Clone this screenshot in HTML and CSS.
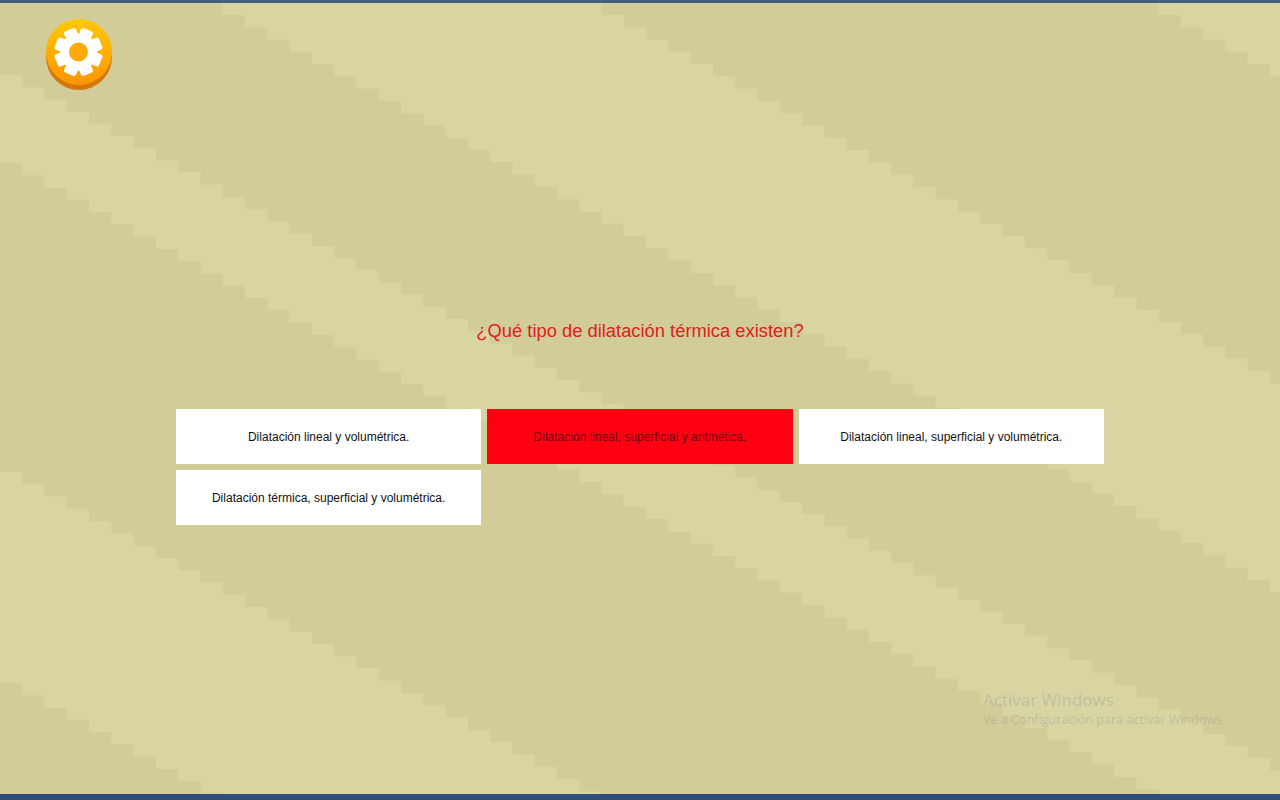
FILE: index.html
```html
<!DOCTYPE html>
<html lang="es">
<head>
    <meta charset="UTF-8">
    <meta name="viewport" content="width=device-width, initial-scale=1.0">
    <title>Dilatación térmica</title>
    <link rel="stylesheet" href="styles.css">
</head>
<body>
    <div class="pantalla">

        <!-- Fondo de franjas escalonadas: cada capa tapa lo que queda abajo a la izquierda -->
        <svg class="fondo" width="1280" height="800" viewBox="0 0 1280 800" aria-hidden="true">
            <path class="oscuro" d="M1158.6,0V15h22.28v12.28h22.28v12.28h22.28v12.28h22.28v12.28h22.28v12.28h22.28v12.28V900H0V0Z"/>
            <path class="claro" d="M601.6,0V15
                h22.28v12.28h22.28v12.28h22.28v12.28h22.28v12.28h22.28v12.28h22.28v12.28h22.28v12.28h22.28v12.28h22.28v12.28h22.28v12.28
                h22.28v12.28h22.28v12.28h22.28v12.28h22.28v12.28h22.28v12.28h22.28v12.28h22.28v12.28h22.28v12.28h22.28v12.28h22.28v12.28
                h22.28v12.28h22.28v12.28h22.28v12.28h22.28v12.28h22.28v12.28h22.28v12.28h22.28v12.28h22.28v12.28h22.28v12.28h22.28v12.28
                h22.28v12.28V900H0V0Z"/>
            <path class="oscuro" d="M222.8,0V15
                h22.28v12.28h22.28v12.28h22.28v12.28h22.28v12.28h22.28v12.28h22.28v12.28h22.28v12.28h22.28v12.28h22.28v12.28h22.28v12.28
                h22.28v12.28h22.28v12.28h22.28v12.28h22.28v12.28h22.28v12.28h22.28v12.28h22.28v12.28h22.28v12.28h22.28v12.28h22.28v12.28
                h22.28v12.28h22.28v12.28h22.28v12.28h22.28v12.28h22.28v12.28h22.28v12.28h22.28v12.28h22.28v12.28h22.28v12.28h22.28v12.28
                h22.28v12.28h22.28v12.28h22.28v12.28h22.28v12.28h22.28v12.28h22.28v12.28h22.28v12.28h22.28v12.28h22.28v12.28h22.28v12.28
                h22.28v12.28h22.28v12.28h22.28v12.28h22.28v12.28h22.28v12.28h22.28v12.28h22.28v12.28h22.28v12.28
                V900H0V0Z"/>
            <path class="claro" d="M0,75
                h22.28v12.2h22.28v12.2h22.28v12.2h22.28v12.2h22.28v12.2h22.28v12.2h22.28v12.2h22.28v12.2h22.28v12.2h22.28v12.2
                h22.28v12.2h22.28v12.2h22.28v12.2h22.28v12.2h22.28v12.2h22.28v12.2h22.28v12.2h22.28v12.2h22.28v12.2h22.28v12.2
                h22.28v12.2h22.28v12.2h22.28v12.2h22.28v12.2h22.28v12.2h22.28v12.2h22.28v12.2h22.28v12.2h22.28v12.2h22.28v12.2
                h22.28v12.2h22.28v12.2h22.28v12.2h22.28v12.2h22.28v12.2h22.28v12.2h22.28v12.2h22.28v12.2h22.28v12.2h22.28v12.2
                h22.28v12.2h22.28v12.2h22.28v12.2h22.28v12.2h22.28v12.2h22.28v12.2h22.28v12.2h22.28v12.2h22.28v12.2h22.28v12.2
                h22.28v12.2h22.28v12.2h22.28v12.2h22.28v12.2h22.28v12.2h22.28v12.2h22.28v12.2h22.28v12.2
                V900H0Z"/>
            <path class="oscuro" d="M0,163
                h22.28v12.28h22.28v12.28h22.28v12.28h22.28v12.28h22.28v12.28h22.28v12.28h22.28v12.28h22.28v12.28h22.28v12.28h22.28v12.28
                h22.28v12.28h22.28v12.28h22.28v12.28h22.28v12.28h22.28v12.28h22.28v12.28h22.28v12.28h22.28v12.28h22.28v12.28h22.28v12.28
                h22.28v12.28h22.28v12.28h22.28v12.28h22.28v12.28h22.28v12.28h22.28v12.28h22.28v12.28h22.28v12.28h22.28v12.28h22.28v12.28
                h22.28v12.28h22.28v12.28h22.28v12.28h22.28v12.28h22.28v12.28h22.28v12.28h22.28v12.28h22.28v12.28h22.28v12.28h22.28v12.28
                h22.28v12.28h22.28v12.28h22.28v12.28h22.28v12.28h22.28v12.28h22.28v12.28h22.28v12.28h22.28v12.28h22.28v12.28h22.28v12.28
                h22.28v12.28h22.28v12.28
                V900H0Z"/>
            <path class="claro" d="M0,472
                h22.28v12.28h22.28v12.28h22.28v12.28h22.28v12.28h22.28v12.28h22.28v12.28h22.28v12.28h22.28v12.28h22.28v12.28h22.28v12.28
                h22.28v12.28h22.28v12.28h22.28v12.28h22.28v12.28h22.28v12.28h22.28v12.28h22.28v12.28h22.28v12.28h22.28v12.28h22.28v12.28
                h22.28v12.28h22.28v12.28h22.28v12.28h22.28v12.28h22.28v12.28h22.28v12.28h22.28v12.28
                V900H0Z"/>
            <path class="oscuro" d="M0,683
                h22.28v12.28h22.28v12.28h22.28v12.28h22.28v12.28h22.28v12.28h22.28v12.28h22.28v12.28h22.28v12.28h22.28v12.28h22.28v12.28
                V900H0Z"/>
        </svg>

        <div class="barra-superior"></div>

        <main class="contenido">
            <!-- Botón de ajustes -->
            <button class="ajustes" aria-label="Ajustes">
                <svg width="66" height="71" viewBox="0 0 66 71">
                    <defs>
                        <linearGradient id="cara" x1="0" y1="0" x2="0" y2="1">
                            <stop offset="0" stop-color="#ffc802"/>
                            <stop offset="1" stop-color="#ff9505"/>
                        </linearGradient>
                    </defs>
                    <circle cx="33" cy="38" r="33" fill="#d5780a"/>
                    <circle cx="33" cy="33" r="33" fill="url(#cara)"/>
                    <g fill="#fff" transform="translate(32.5 33)">
                        <circle r="18.5"/>
                        <rect x="-6.5" y="-24" width="13" height="12" rx="2.5" transform="rotate(22.5)"/>
                        <rect x="-6.5" y="-24" width="13" height="12" rx="2.5" transform="rotate(67.5)"/>
                        <rect x="-6.5" y="-24" width="13" height="12" rx="2.5" transform="rotate(112.5)"/>
                        <rect x="-6.5" y="-24" width="13" height="12" rx="2.5" transform="rotate(157.5)"/>
                        <rect x="-6.5" y="-24" width="13" height="12" rx="2.5" transform="rotate(202.5)"/>
                        <rect x="-6.5" y="-24" width="13" height="12" rx="2.5" transform="rotate(247.5)"/>
                        <rect x="-6.5" y="-24" width="13" height="12" rx="2.5" transform="rotate(292.5)"/>
                        <rect x="-6.5" y="-24" width="13" height="12" rx="2.5" transform="rotate(337.5)"/>
                        <circle r="9.5" fill="#ffa90a"/>
                    </g>
                </svg>
            </button>

            <h1 class="pregunta">¿Qué tipo de dilatación térmica existen?</h1>

            <div class="respuestas">
                <button class="respuesta">Dilatación lineal y volumétrica.</button>
                <button class="respuesta incorrecta">Dilatación lineal, superficial y aritmética.</button>
                <button class="respuesta">Dilatación lineal, superficial y volumétrica.</button>
                <button class="respuesta">Dilatación térmica, superficial y volumétrica.</button>
            </div>
        </main>

        <div class="barra-inferior"></div>

        <!-- Marca de agua de Windows -->
        <div class="activar">
            <div class="activar-titulo">Activar Windows</div>
            <div class="activar-texto">Ve a Configuración para activar Windows.</div>
        </div>
    </div>
</body>
</html>
```

FILE: styles.css
```css
body {
    margin: 0;
    font-family: "Liberation Sans", Arial, sans-serif;
}
.pantalla {
    position: relative;
    display: flex;
    flex-direction: column;
    height: 100vh;
    overflow: hidden;
    background-color: #d8d5a3;
}
.fondo {
    position: absolute;
    top: 0;
    left: 0;
}
.claro {
    fill: #d8d5a3;
}
.oscuro {
    fill: #d2cc99;
}
.barra-superior {
    position: relative;
    height: 3px;
    background-color: #42607e;
}
.barra-inferior {
    position: relative;
    height: 6px;
    background-color: #2f4e78;
}
.contenido {
    position: relative;
    flex: 1;
    padding-top: 16px;
}
.ajustes {
    display: block;
    margin-left: 46px;
    padding: 0;
    border: none;
    background: none;
    cursor: pointer;
}
.ajustes svg {
    display: block;
}
.pregunta {
    margin: 230px 0 68px;
    font-size: 18.35px;
    font-weight: normal;
    line-height: 21px;
    text-align: center;
    color: #e0201a;
}
.respuestas {
    display: grid;
    grid-template-columns: repeat(3, 1fr);
    gap: 6px;
    width: 928px;
    margin: 0 auto;
}
.respuesta {
    height: 55px;
    padding: 0;
    border: none;
    font-family: inherit;
    font-size: 12px;
    color: #111;
    background-color: white;
    cursor: pointer;
}
.incorrecta {
    color: #6a0010;
    background-color: #ff0013;
}
.activar {
    position: absolute;
    left: 983px;
    top: 690px;
    font-family: "Open Sans", sans-serif;
    color: rgba(125, 135, 145, 0.3);
}
.activar-titulo {
    font-size: 17px;
    line-height: 20px;
}
.activar-texto {
    font-size: 12.6px;
    line-height: 20px;
}
```
